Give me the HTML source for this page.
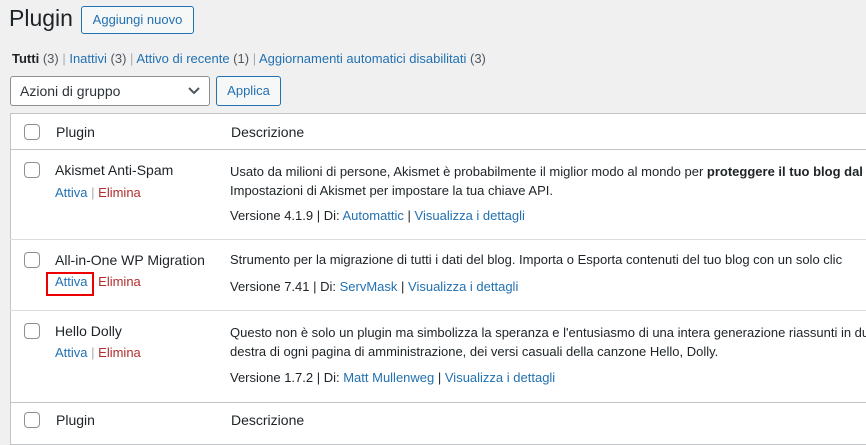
<!DOCTYPE html><html><head><style>
body{margin:0;width:866px;height:438px;overflow:hidden;background:#f0f0f1;font-family:"Liberation Sans",sans-serif;font-size:13px;color:#3c434a;position:relative}
.a{position:absolute;white-space:nowrap}
a{color:#2271b1;text-decoration:none}
.r{color:#b32d2e}
.sep{color:#a7aaad}
.cb{position:absolute;width:14px;height:14px;border:1px solid #8c8f94;border-radius:4px;background:#fff}
.t{position:absolute;left:10px;top:113px;width:870px;height:330px;background:#fff;border:1px solid #c3c4c7}
.l{position:absolute;left:10px;width:870px;height:1px;background:#dcdcde}
.h{color:#1d2327}
</style></head><body>
<div class="a" style="left:9px;top:5px;font-size:23px;color:#1d2327">Plugin</div>
<div class="a" style="left:81px;top:6px;width:111px;height:26px;border:1px solid #2271b1;border-radius:3px;color:#2271b1;font-size:13px;line-height:26px;text-align:center;background:#f6f7f7">Aggiungi nuovo</div>
<div class="a" style="left:12px;top:51px"><b class="h" style="font-weight:600">Tutti</b> <span class="h" style="color:#50575e">(3)</span> <span class="sep">|</span> <a>Inattivi <span style="color:#50575e">(3)</span></a> <span class="sep">|</span> <a>Attivo di recente <span style="color:#50575e">(1)</span></a> <span class="sep">|</span> <a>Aggiornamenti automatici disabilitati <span style="color:#50575e">(3)</span></a></div>
<div class="a" style="left:10px;top:76px;width:198px;height:28px;border:1px solid #8c8f94;border-radius:3px;background:#fff;line-height:28px;font-size:14px;color:#2c3338"><span style="margin-left:9px">Azioni di gruppo</span>
<svg style="position:absolute;right:9px;top:10px" width="12" height="8"><path d="M1 1l5 5 5-5" stroke="#50575e" stroke-width="2" fill="none"/></svg></div>
<div class="a" style="left:216px;top:76px;width:63px;height:28px;border:1px solid #2271b1;border-radius:3px;background:#f6f7f7;line-height:28px;text-align:center;color:#2271b1">Applica</div>
<div class="t"></div>
<div class="l" style="top:149px;background:#c3c4c7"></div>
<div class="l" style="top:239px"></div>
<div class="l" style="top:310px"></div>
<div class="l" style="top:402px;background:#c3c4c7"></div>
<div class="cb" style="left:24px;top:124px"></div>
<div class="a h" style="left:56px;top:124px;font-size:14px">Plugin</div>
<div class="a h" style="left:231px;top:124px;font-size:14px">Descrizione</div>

<div class="cb" style="left:24px;top:162px"></div>
<div class="a h" style="left:55px;top:162px;font-size:14px">Akismet Anti-Spam</div>
<div class="a" style="left:55px;top:185px"><a>Attiva</a> <span class="sep">|</span> <a class="r">Elimina</a></div>
<div class="a h" style="left:230px;top:162px;line-height:19px">Usato da milioni di persone, Akismet è probabilmente il miglior modo al mondo per <b>proteggere il tuo blog dal</b><br>Impostazioni di Akismet per impostare la tua chiave API.</div>
<div class="a h" style="left:230px;top:208px">Versione 4.1.9 | Di: <a>Automattic</a> | <a>Visualizza i dettagli</a></div>

<div class="cb" style="left:24px;top:252px"></div>
<div class="a h" style="left:55px;top:252px;font-size:14px">All-in-One WP Migration</div>
<div class="a" style="left:55px;top:274px"><a>Attiva</a> <span class="sep">|</span> <a class="r">Elimina</a></div>
<div class="a" style="left:46px;top:272px;width:44px;height:20px;border:2px solid #e00"></div>
<div class="a h" style="left:230px;top:252px">Strumento per la migrazione di tutti i dati del blog. Importa o Esporta contenuti del tuo blog con un solo clic</div>
<div class="a h" style="left:230px;top:279px">Versione 7.41 | Di: <a>ServMask</a> | <a>Visualizza i dettagli</a></div>

<div class="cb" style="left:24px;top:323px"></div>
<div class="a h" style="left:55px;top:323px;font-size:14px">Hello Dolly</div>
<div class="a" style="left:55px;top:345px"><a>Attiva</a> <span class="sep">|</span> <a class="r">Elimina</a></div>
<div class="a h" style="left:230px;top:323px;line-height:19px">Questo non è solo un plugin ma simbolizza la speranza e l'entusiasmo di una intera generazione riassunti in due<br>destra di ogni pagina di amministrazione, dei versi casuali della canzone Hello, Dolly.</div>
<div class="a h" style="left:230px;top:370px">Versione 1.7.2 | Di: <a>Matt Mullenweg</a> | <a>Visualizza i dettagli</a></div>

<div class="cb" style="left:24px;top:412px"></div>
<div class="a h" style="left:56px;top:412px;font-size:14px">Plugin</div>
<div class="a h" style="left:231px;top:412px;font-size:14px">Descrizione</div>
</body></html>
